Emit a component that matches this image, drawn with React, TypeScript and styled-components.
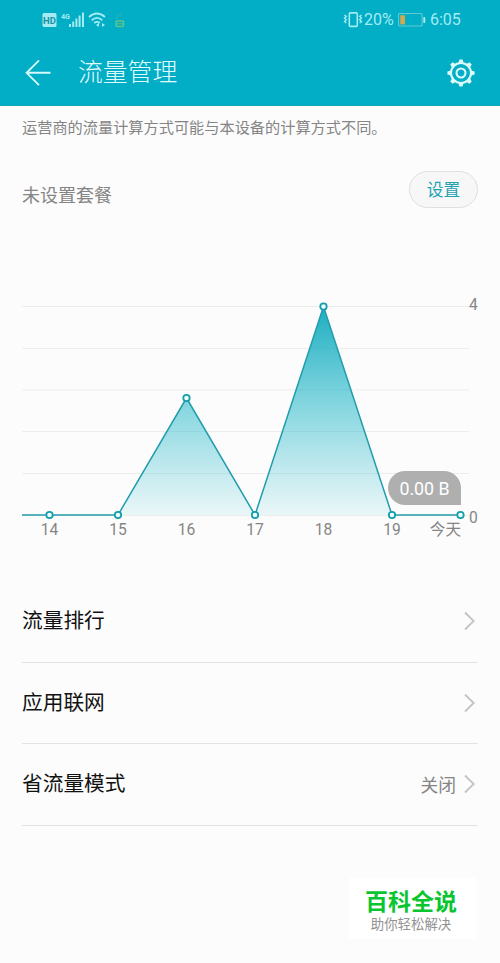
import React from "react";
import styled, { createGlobalStyle } from "styled-components";

const GlobalStyle = createGlobalStyle`
  * { box-sizing: border-box; }
  body {
    margin: 0;
    background: #fcfcfc;
    font-family: Roboto, "Noto Sans CJK SC", sans-serif;
  }
`;

const Screen = styled.div`
  position: relative;
  display: flex;
  flex-direction: column;
  width: 500px;
  height: 963px;
  overflow: hidden;
  background: #fcfcfc;
`;

const Header = styled.header`
  height: 106px;
  background: #02adc6;
  border-bottom: 1px solid #1aa3b6;
`;

const StatusBar = styled.div`
  display: flex;
  align-items: center;
  justify-content: space-between;
  height: 40px;
  padding: 0 40px 0 42px;
  color: #a3ecf3;
`;

const StatusGroup = styled.div`
  display: flex;
  align-items: center;
`;

const StatusText = styled.span<{ $width: number }>`
  width: ${(p) => p.$width}px;
  font-size: 16px;
  line-height: 20px;
  white-space: nowrap;
`;

const TitleBar = styled.div`
  display: flex;
  align-items: center;
  height: 65px;
  padding: 0 24px;
`;

const Title = styled.h1`
  flex: 1;
  margin: 1px 0 0 26px;
  color: #e0fbfc;
  font-size: 24.8px;
  font-weight: 300;
  line-height: 36px;
`;

const IconButton = styled.button`
  display: flex;
  padding: 0;
  border: 0;
  background: none;
`;

const Notice = styled.p`
  height: 22px;
  margin: 11px 22px 0;
  color: #858585;
  font-size: 15.2px;
  line-height: 22px;
  white-space: nowrap;
`;

const PlanRow = styled.section`
  display: flex;
  align-items: flex-start;
  justify-content: space-between;
  height: 37px;
  margin: 32px 22px 0;
`;

const PlanText = styled.span`
  padding-top: 12px;
  color: #858585;
  font-size: 18px;
  line-height: 26px;
`;

const SetButton = styled.button`
  width: 69px;
  height: 37px;
  padding: 0 0 1px;
  border: 1px solid #dfdfdf;
  border-radius: 19px;
  background: #f7f7f7;
  color: #23a2b0;
  font-family: inherit;
  font-size: 16.7px;
`;

const ChartPanel = styled.section`
  position: relative;
  height: 290px;
  margin-top: 82px;
`;

const Tooltip = styled.div`
  position: absolute;
  left: 388px;
  top: 181px;
  display: flex;
  align-items: center;
  justify-content: center;
  width: 73px;
  height: 34px;
  border-radius: 17px 17px 0 17px;
  background: #afafaf;
  color: #fff;
  font-size: 17.8px;
`;

const AxisText = styled.text`
  fill: #858585;
  font-size: 15.6px;
`;

const List = styled.ul`
  margin: 1px 22px 0;
  padding: 0;
  list-style: none;
`;

const Row = styled.li`
  display: flex;
  align-items: center;
  height: 81.5px;
  padding-right: 2px;
  border-bottom: 1px solid #e3e3e3;
`;

const RowLabel = styled.span`
  flex: 1;
  color: #111;
  font-size: 20.7px;
  line-height: 30px;
`;

const RowValue = styled.span`
  margin-right: 8px;
  color: #858585;
  font-size: 17.8px;
`;

const Badge = styled.aside`
  position: absolute;
  left: 349px;
  top: 878px;
  display: flex;
  flex-direction: column;
  align-items: center;
  width: 127px;
  height: 61px;
  padding-top: 10px;
  padding-right: 3px;
  background: #fff;
`;

const BadgeTitle = styled.strong`
  color: #09c52f;
  font-size: 23px;
  font-weight: 700;
  line-height: 30px;
`;

const BadgeText = styled.span`
  color: #929292;
  font-size: 13.4px;
  line-height: 14px;
`;

const usage = [
  { day: "14", x: 49.5, y: 225 },
  { day: "15", x: 118, y: 225 },
  { day: "16", x: 186.5, y: 108 },
  { day: "17", x: 255, y: 225 },
  { day: "18", x: 323.5, y: 16.5 },
  { day: "19", x: 392, y: 225 },
  { day: "今天", x: 460.5, y: 225 },
];

const gridLines = [16.5, 58.5, 100, 141.5, 183.5, 225.5];

function SignalIcons() {
  return (
    <svg width="84" height="24" viewBox="42 8 84 24">
      <rect x="42.5" y="13" width="14" height="14" rx="1.5" fill="#a3ecf3" />
      <text x="49.5" y="23.5" textAnchor="middle" fontSize="9.5" fontWeight="700" fill="#1692a5">HD</text>
      <text x="61" y="19" fontSize="7.5" fontWeight="700" textLength="9" lengthAdjust="spacingAndGlyphs" fill="#a3ecf3">4G</text>
      <g fill="#a3ecf3">
        <rect x="69" y="24" width="2" height="3" />
        <rect x="72.2" y="21.5" width="2" height="5.5" />
        <rect x="75.4" y="18.5" width="2" height="8.5" />
        <rect x="78.6" y="15.5" width="2" height="11.5" />
        <rect x="82" y="12.5" width="2" height="14.5" />
      </g>
      <g fill="none" stroke="#a3ecf3" strokeWidth="1.8">
        <path d="M89 17q8-7 16 0M91.7 20.2q5.3-4.6 10.6 0M94.2 23q2.8-2.2 5.6 0" />
      </g>
      <path d="M99 23v4l-3-2zM102 23v4l3-2z" fill="#a3ecf3" />
      <path d="M117 19v-2.5a3 3 0 0 1 5.5-1" fill="none" stroke="#35b5bc" />
      <rect x="116" y="21" width="7.5" height="5.5" rx="1" fill="none" stroke="#5fc58a" strokeWidth="1.5" />
      <path d="M117 23.8h5.5" stroke="#5fc58a" />
    </svg>
  );
}

function VibrateIcon() {
  return (
    <svg width="21" height="20" viewBox="343 10 21 20" fill="none" stroke="#a3ecf3">
      <rect x="349.3" y="12.9" width="8" height="13.5" rx="1" strokeWidth="1.6" />
      <path d="m344.5 15 1.8 1.4-1.8 1.7 1.8 1.7-1.8 1.7 1.8 1.6M361.5 15l-1.8 1.4 1.8 1.7-1.8 1.7 1.8 1.7-1.8 1.6" strokeWidth="1.4" />
    </svg>
  );
}

function BatteryIcon() {
  return (
    <svg width="32" height="20" viewBox="398 10 32 20">
      <rect x="398.6" y="13.5" width="23.5" height="12.5" rx="1" fill="none" stroke="#60cbd5" strokeWidth="1.1" />
      <rect x="400.3" y="15.2" width="4.6" height="9.2" fill="#d7a84c" />
      <rect x="423.3" y="17" width="2" height="6" rx=".7" fill="#a3ecf3" />
    </svg>
  );
}

function BackIcon() {
  return (
    <svg width="28" height="28" viewBox="24 59 28 28" fill="none" stroke="#d5fafc" strokeWidth="1.9">
      <path d="M50.5 72.8H27M39 60.4 26.6 72.8 39 85.2" />
    </svg>
  );
}

const teeth = [0, 45, 90, 135, 180, 225, 270, 315];

function GearIcon() {
  return (
    <svg width="30" height="30" viewBox="-15 -15 30 30" fill="none" stroke="#dcfcfd">
      <circle r="10" strokeWidth="2.1" />
      <circle r="4.5" strokeWidth="2.1" />
      {teeth.map((angle) => (
        <path key={angle} d="M-2.5-10.2-1.6-13.6H1.6L2.5-10.2Z" transform={`rotate(${angle})`} fill="#dcfcfd" stroke="none" />
      ))}
    </svg>
  );
}

function Chevron() {
  return (
    <svg width="12" height="20" viewBox="0 0 12 20" fill="none" stroke="#c3c3c3" strokeWidth="1.8">
      <path d="m1 1.5 8.7 8.5L1 18.5" />
    </svg>
  );
}

function UsageChart() {
  const line = usage.map((p) => `${p.x},${p.y}`).join(" ");
  return (
    <ChartPanel>
      <svg width="500" height="290" viewBox="0 0 500 290">
        <defs>
          <linearGradient id="usage-fill" gradientUnits="userSpaceOnUse" x1="0" y1="16" x2="0" y2="226">
            <stop offset="0" stopColor="#10a8bd" stopOpacity=".95" />
            <stop offset=".45" stopColor="#1bb4c6" stopOpacity=".55" />
            <stop offset="1" stopColor="#25b9ca" stopOpacity=".08" />
          </linearGradient>
        </defs>
        {gridLines.map((y) => (
          <path key={y} d={`M22 ${y}H469`} stroke="#ededed" />
        ))}
        <polygon points={`22,225 ${line} 460.5,225`} fill="url(#usage-fill)" />
        <polyline points={`22,225 ${line}`} fill="none" stroke="#229dac" strokeWidth="1.5" strokeLinejoin="round" />
        {usage.map((p) => (
          <circle key={p.day} cx={p.x} cy={p.y} r="3.2" fill="#edffff" stroke="#169dac" strokeWidth="1.8" />
        ))}
        {usage.map((p) => (
          <AxisText key={p.day} x={p.day === "今天" ? 461 : p.x} y="244.8" textAnchor={p.day === "今天" ? "end" : "middle"}>
            {p.day}
          </AxisText>
        ))}
        <AxisText x="473.5" y="20" textAnchor="middle">4</AxisText>
        <AxisText x="473.5" y="233.3" textAnchor="middle">0</AxisText>
      </svg>
      <Tooltip>0.00 B</Tooltip>
    </ChartPanel>
  );
}

const settings = [
  { label: "流量排行" },
  { label: "应用联网" },
  { label: "省流量模式", value: "关闭" },
];

export default function App() {
  return (
    <Screen>
      <GlobalStyle />
      <Header>
        <StatusBar>
          <SignalIcons />
          <StatusGroup>
            <VibrateIcon />
            <StatusText $width={34}>20%</StatusText>
            <BatteryIcon />
            <StatusText $width={30}>6:05</StatusText>
          </StatusGroup>
        </StatusBar>
        <TitleBar>
          <IconButton aria-label="返回"><BackIcon /></IconButton>
          <Title>流量管理</Title>
          <IconButton aria-label="设置"><GearIcon /></IconButton>
        </TitleBar>
      </Header>
      <Notice>运营商的流量计算方式可能与本设备的计算方式不同。</Notice>
      <PlanRow>
        <PlanText>未设置套餐</PlanText>
        <SetButton>设置</SetButton>
      </PlanRow>
      <UsageChart />
      <List>
        {settings.map((item) => (
          <Row key={item.label}>
            <RowLabel>{item.label}</RowLabel>
            {item.value && <RowValue>{item.value}</RowValue>}
            <Chevron />
          </Row>
        ))}
      </List>
      <Badge>
        <BadgeTitle>百科全说</BadgeTitle>
        <BadgeText>助你轻松解决</BadgeText>
      </Badge>
    </Screen>
  );
}
